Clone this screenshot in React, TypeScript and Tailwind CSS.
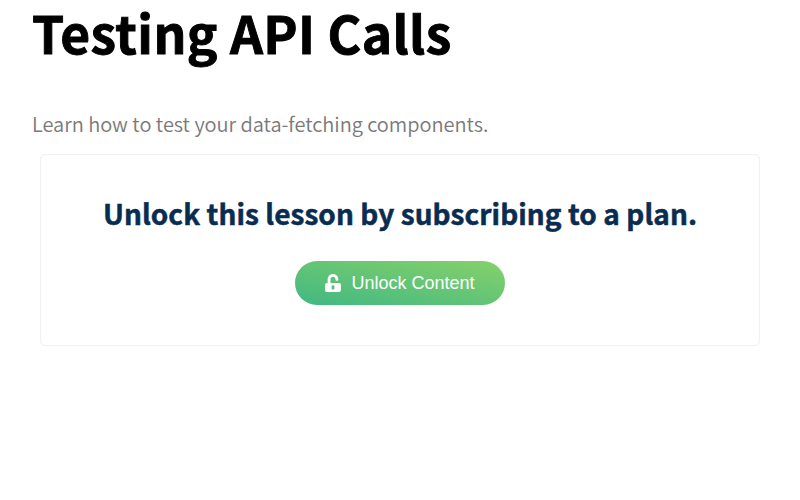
import { FaUnlockAlt } from "react-icons/fa";

export default function App() {
  return (
    <main className="h-[500px] w-[800px] bg-white px-8 font-['Noto_Sans_CJK_SC',sans-serif]">
      <h1 className="h-[72px] whitespace-nowrap text-[51.5px] leading-[64px] font-bold tracking-[0.38px] text-black [-webkit-text-stroke:0.9px_black]">
        Testing API Calls
      </h1>
      <p className="mt-9 h-8 whitespace-nowrap text-[20px] leading-8 font-[350] tracking-[-0.04px] text-[#7a7a7a]">
        Learn how to test your data-fetching components.
      </p>
      <section className="mx-2 mt-3.5 flex h-[192px] flex-col items-center rounded-[5px] border border-[#f0f0f0] pt-[38px]">
        <h2 className="h-10 whitespace-nowrap text-[28px] leading-10 font-bold tracking-[0.06px] text-[#0a2c51] [-webkit-text-stroke:0.5px_#0a2c51]">
          Unlock this lesson by subscribing to a plan.
        </h2>
        <button className="mt-7 flex h-11 w-[210px] items-center justify-center rounded-full bg-[linear-gradient(to_top_right,#41b883,#86d169)] text-white">
          <FaUnlockAlt className="mr-2.5 h-[18px] w-4" />
          <span className="whitespace-nowrap font-['Liberation_Sans',Arial,sans-serif] text-[18px] leading-5">
            Unlock Content
          </span>
        </button>
      </section>
    </main>
  );
}
